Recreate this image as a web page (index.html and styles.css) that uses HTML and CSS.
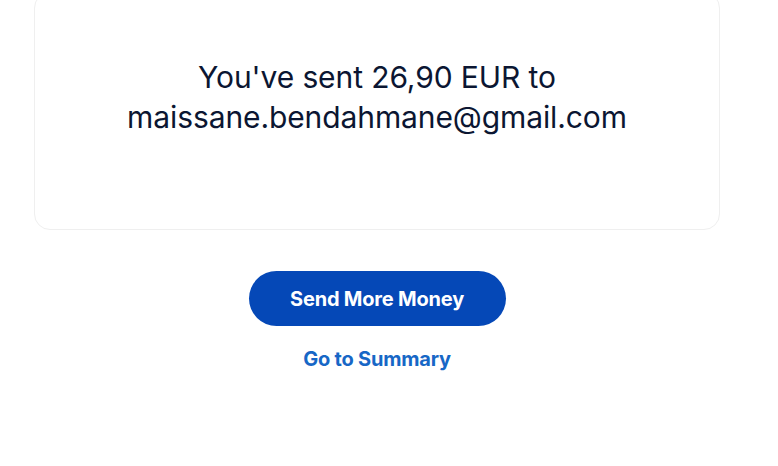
FILE: index.html
```html
<!DOCTYPE html>
<html>
<head>
<meta charset="utf-8">
<link rel="stylesheet" href="styles.css">
</head>
<body>
<main class="page">
  <section class="card">
    <p class="message">You've sent 26,90 EUR to<br>maissane.bendahmane@gmail.com</p>
  </section>
  <div class="actions">
    <button class="primary">Send More Money</button>
    <a class="link" href="#">Go to Summary</a>
  </div>
</main>
</body>
</html>
```
FILE: styles.css
```css
html, body {
  margin: 0;
  padding: 0;
  background: #ffffff;
}
.page {
  width: 686px;
  margin: 0 0 0 34px;
  font-family: "Inter", "Liberation Sans", sans-serif;
}
.card {
  margin-top: -8px;
  height: 238px;
  box-sizing: border-box;
  border: 1px solid #efefef;
  border-radius: 16px;
  background: #fff;
  padding-top: 64px;
  text-align: center;
}
.message {
  margin: 0;
  font-size: 30px;
  line-height: 40px;
  letter-spacing: -0.1px;
  color: #0b1632;
  font-weight: 400;
}
.actions {
  display: flex;
  flex-direction: column;
  align-items: center;
  padding-top: 41px;
}
.primary {
  width: 257px;
  height: 55px;
  border: none;
  border-radius: 28px;
  background: #0548b7;
  color: #fff;
  font-family: "Inter", "Liberation Sans", sans-serif;
  font-weight: 700;
  font-size: 20px;
  letter-spacing: -0.2px;
  cursor: pointer;
}
.link {
  margin-top: 21px;
  color: #1767c6;
  font-weight: 700;
  font-size: 20px;
  line-height: 24px;
  letter-spacing: -0.2px;
  text-decoration: none;
}
```
